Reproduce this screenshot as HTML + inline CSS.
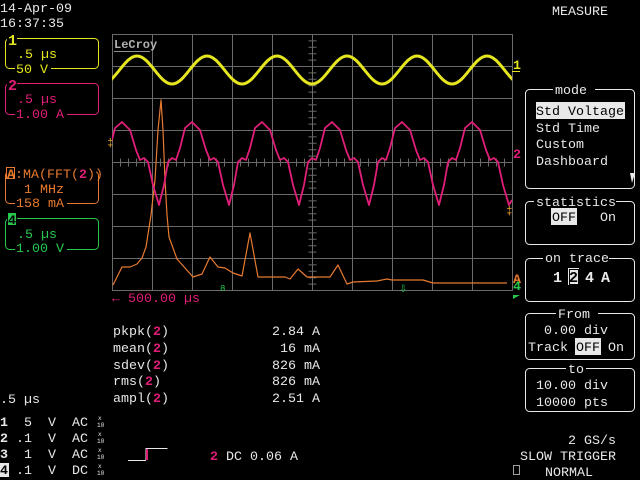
<!DOCTYPE html>
<html><head><meta charset="utf-8"><style>
html,body{margin:0;padding:0;background:#000;width:640px;height:480px;overflow:hidden}
svg text{font-family:"Liberation Mono",monospace;font-size:13.33px}
svg text.s{font-size:6px}
</style></head><body>
<svg width="640" height="480" xmlns="http://www.w3.org/2000/svg">
<defs><clipPath id="g"><rect x="112" y="34" width="400" height="256"/></clipPath></defs>
<rect width="640" height="480" fill="#000"/>
<g stroke="#6a6a6a" stroke-width="1" fill="none">
<rect x="112.5" y="34.5" width="400" height="256"/>
<path d="M152.5 34v256M192.5 34v256M232.5 34v256M272.5 34v256M312.5 34v256M352.5 34v256M392.5 34v256M432.5 34v256M472.5 34v256M112 66.5h400M112 98.5h400M112 130.5h400M112 162.5h400M112 194.5h400M112 226.5h400M112 258.5h400"/>
<line x1="312.5" y1="34" x2="312.5" y2="290" stroke-width="8" stroke-dasharray="1 5.4"/>
<line x1="112" y1="162.5" x2="512" y2="162.5" stroke-width="8" stroke-dasharray="1 7"/>
</g>
<text x="114" y="48" fill="#b0b0b0" font-weight="bold" style="font-size:12px">LeCroy</text>
<line x1="114" y1="51.5" x2="150" y2="51.5" stroke="#909090"/>
<g clip-path="url(#g)" fill="none" stroke-linejoin="round">
<path d="M102,84 C114.9,84 124.1,56 137,56 S159.1,84 172,84 S194.1,56 207,56 S229.1,84 242,84 S264.1,56 277,56 S299.1,84 312,84 S334.1,56 347,56 S369.1,84 382,84 S404.1,56 417,56 S439.1,84 452,84 S474.1,56 487,56 S509.1,84 522,84" stroke="#e6e620" stroke-width="3"/>
<polyline stroke="#e87a30" stroke-width="1.2" points="113,285 122,267 130,267 137,264 142,258 146,247 151,215 155,180 158,130 161,100 163,130 165,180 167,215 169,237 177,259 193,277 202,274 210,257 218,267 225,268 233,273 242,276 250,233 258,277 285,277 290,279 298,269 307,277 330,277 338,265 347,284 353,282 377,281 387,279 392,280 423,280 433,283 507,283"/>
<polyline stroke="#e01e78" stroke-width="1.8" points="112,140 115,128 122,122 130,130 136,150 140,160 144,158 148,162 153,185 159,205 164,185 168,162 172,158 176,160 180,148 185,128 192,122 200,130 206,150 210,160 214,158 218,162 223,185 229,205 234,185 238,162 242,158 246,160 250,148 255,128 262,122 270,130 276,150 280,160 284,158 288,162 293,185 299,205 304,185 308,162 312,158 316,160 320,148 325,128 332,122 340,130 346,150 350,160 354,158 358,162 363,185 369,205 374,185 378,162 382,158 386,160 390,148 395,128 402,122 410,130 416,150 420,160 424,158 428,162 433,185 439,205 444,185 448,162 452,158 456,160 460,148 465,128 472,122 480,130 486,150 490,160 494,158 498,162 503,185 509,205 512,200"/>
</g>
<text x="220" y="291" fill="#28c850" style="font-size:9px">8</text>
<text x="399" y="292" fill="#28c850" style="font-size:10px">⇩</text>
<text x="513" y="69" fill="#e6e620" font-weight="bold">1</text><line x1="512" y1="71.5" x2="520" y2="71.5" stroke="#e6e620"/>
<text x="513" y="158" fill="#e01e78" font-weight="bold">2</text>
<text x="107" y="146" fill="#e8a030" style="font-size:11px">‡</text>
<text x="506" y="214" fill="#e8a030" style="font-size:11px">‡</text>
<text x="513" y="283" fill="#e87a30" font-weight="bold">A</text>
<text x="513" y="290" fill="#28c850" font-weight="bold">4</text>
<path d="M513 299 L520 295 L513 295Z" fill="#28c850"/>
<text x="112" y="302" fill="#e01e78">← 500.00 µs</text>
<text x="0" y="12" fill="#e8e8e8">14-Apr-09</text>
<text x="0" y="27" fill="#e8e8e8">16:37:35</text>
<text x="552" y="15" fill="#e8e8e8">MEASURE</text>
<g fill="none" stroke-width="1">
<rect x="5.5" y="38.5" width="93" height="30" rx="4" stroke="#e6e620"/>
<rect x="5.5" y="83.5" width="93" height="31" rx="4" stroke="#e01e78"/>
<rect x="5.5" y="171.5" width="93" height="32" rx="4" stroke="#e87a30"/>
<rect x="5.5" y="218.5" width="93" height="31" rx="4" stroke="#28c850"/>
</g>
<rect x="7" y="32" width="10" height="14" fill="#000"/><text x="8" y="45" fill="#e6e620" font-weight="bold" style="font-size:15px">1</text>
<text x="17" y="58" fill="#e6e620">.5 µs</text>
<rect x="15" y="62" width="36" height="12" fill="#000"/><text x="16" y="73" fill="#e6e620">50 V</text>
<rect x="7" y="77" width="10" height="14" fill="#000"/><text x="8" y="90" fill="#e01e78" font-weight="bold" style="font-size:15px">2</text>
<text x="17" y="103" fill="#e01e78">.5 µs</text>
<rect x="15" y="108" width="52" height="12" fill="#000"/><text x="16" y="118" fill="#e01e78">1.00 A</text>
<rect x="6" y="166" width="90" height="13" fill="#000"/>
<rect x="6.5" y="167.5" width="8" height="11" fill="none" stroke="#e87a30"/><text x="7" y="178" fill="#e87a30" font-weight="bold">A</text>
<text x="15" y="178" fill="#e87a30">:MA(FFT(<tspan fill="#e01e78" font-weight="bold">2</tspan>))</text>
<text x="24" y="193" fill="#e87a30">1 MHz</text>
<rect x="15" y="197" width="52" height="12" fill="#000"/><text x="16" y="207" fill="#e87a30">158 mA</text>
<rect x="7" y="212" width="10" height="14" fill="#000"/><rect x="8" y="213" width="8" height="12" fill="#28c850"/><text x="8" y="224" fill="#000" font-weight="bold">4</text>
<text x="17" y="238" fill="#28c850">.5 µs</text>
<rect x="15" y="243" width="52" height="12" fill="#000"/><text x="16" y="252" fill="#28c850">1.00 V</text>
<g fill="#e8e8e8">
<text x="113" y="335">pkpk(<tspan fill="#e01e78" font-weight="bold">2</tspan>)</text>
<text x="113" y="352">mean(<tspan fill="#e01e78" font-weight="bold">2</tspan>)</text>
<text x="113" y="369">sdev(<tspan fill="#e01e78" font-weight="bold">2</tspan>)</text>
<text x="113" y="385">rms(<tspan fill="#e01e78" font-weight="bold">2</tspan>)</text>
<text x="113" y="402">ampl(<tspan fill="#e01e78" font-weight="bold">2</tspan>)</text>
<text x="320" y="335" text-anchor="end">2.84 A</text>
<text x="320" y="352" text-anchor="end">16 mA</text>
<text x="320" y="369" text-anchor="end">826 mA</text>
<text x="320" y="385" text-anchor="end">826 mA</text>
<text x="320" y="402" text-anchor="end">2.51 A</text>
<text x="0" y="403">.5 µs</text>
<g font-weight="bold"><text x="0" y="426">1</text><text x="0" y="442">2</text><text x="0" y="458">3</text></g>
<rect x="0" y="463" width="9" height="14" fill="#e8e8e8"/><text x="0" y="474" fill="#000" font-weight="bold">4</text>
<text x="32" y="426" text-anchor="end">5</text><text x="32" y="442" text-anchor="end">.1</text><text x="32" y="458" text-anchor="end">1</text><text x="32" y="474" text-anchor="end">.1</text>
<text x="48" y="426">V</text><text x="48" y="442">V</text><text x="48" y="458">V</text><text x="48" y="474">V</text>
<text x="72" y="426">AC</text><text x="72" y="442">AC</text><text x="72" y="458">AC</text><text x="72" y="474">DC</text>
<text class="s" x="98" y="420">x</text><text class="s" x="97" y="427">10</text><text class="s" x="98" y="436">x</text><text class="s" x="97" y="443">10</text><text class="s" x="98" y="452">x</text><text class="s" x="97" y="459">10</text><text class="s" x="98" y="468">x</text><text class="s" x="97" y="475">10</text>
<text x="210" y="460"><tspan fill="#e01e78" font-weight="bold">2</tspan> DC 0.06 A</text>
<text x="616" y="444" text-anchor="end">2 GS/s</text>
<text x="520" y="460">SLOW TRIGGER</text>
<text x="545" y="476">NORMAL</text>
</g>
<rect x="513.5" y="465.5" width="6" height="9" fill="none" stroke="#a0a0a0"/>
<path d="M128 460.5h18M146 460V448M146.5 448.5h21" stroke="#e8e8e8" fill="none"/><path d="M147 449v11" stroke="#e01e78" stroke-width="2"/>
<g fill="none" stroke="#e8e8e8">
<rect x="525.5" y="89.5" width="109" height="99" rx="4"/>
<rect x="525.5" y="201.5" width="109" height="43" rx="4"/>
<rect x="525.5" y="258.5" width="109" height="43" rx="4"/>
<rect x="525.5" y="313.5" width="109" height="46" rx="4"/>
<rect x="525.5" y="368.5" width="109" height="43" rx="4"/>
</g>
<g fill="#000"><rect x="553" y="84" width="42" height="12"/><rect x="534" y="196" width="82" height="12"/><rect x="543" y="253" width="66" height="12"/><rect x="556" y="308" width="42" height="12"/><rect x="566" y="363" width="20" height="12"/></g>
<g fill="#e8e8e8">
<text x="555" y="94">mode</text>
<rect x="536" y="102" width="89" height="17"/>
<text x="536" y="115" fill="#000">Std Voltage</text>
<text x="536" y="132">Std Time</text>
<text x="536" y="148">Custom</text>
<text x="536" y="165">Dashboard</text>
<path d="M630 173h5l-3 10z"/>
<text x="536" y="206">statistics</text>
<rect x="551" y="208" width="26" height="17"/>
<text x="552" y="221" fill="#000">OFF</text>
<text x="600" y="221">On</text>
<text x="545" y="262">on trace</text>
<g font-weight="bold"><text x="553" y="282" style="font-size:15px">1</text><rect x="568" y="268" width="11" height="17"/><text x="569" y="282" fill="#000" style="font-size:15px">2</text><text x="585" y="282" style="font-size:15px">4</text><text x="601" y="282" style="font-size:15px">A</text></g>
<rect x="569.5" y="269.5" width="9" height="15" fill="none" stroke="#000"/>
<text x="558" y="318">From</text>
<text x="544" y="334">0.00 div</text>
<text x="528" y="351">Track</text>
<rect x="575" y="338" width="26" height="17"/>
<text x="576" y="351" fill="#000">OFF</text>
<text x="608" y="351">On</text>
<text x="568" y="373">to</text>
<text x="536" y="389">10.00 div</text>
<text x="536" y="406">10000 pts</text>
</g>
</svg>
</body></html>
